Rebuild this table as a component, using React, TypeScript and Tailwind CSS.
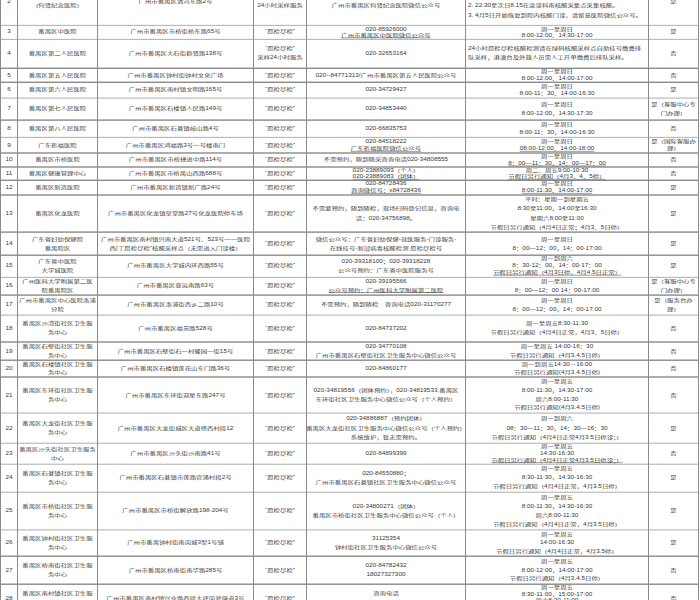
type Row = {
  no: string;
  name: string[];
  addr: string[];
  way: string[];
  tel: string[];
  time: string[];
  note: string[];
  leftTime?: boolean;
};

// lines starting with "_" are underlined in the source sheet
const Y = "“愿检尽检”";

const rows: Row[] = [
  {
    no: "2",
    name: ["番禺区何贤纪念医院", "（何贤纪念医院）"],
    addr: ["广州市番禺区清河东路2号"],
    way: [Y, "24小时采样服务"],
    tel: ["020-84518888", "广州市番禺区何贤纪念医院微信公众号"],
    time: [
      "愿检尽检人员请按以下时间段前往采样：",
      "1. 8:00-22:30在门诊核酸采集点采集核酸。",
      "2. 22:30至次日8.15在急诊科南核酸采集点采集核酸。",
      "3. 4月5日开始恢复到院内核酸门诊，请留意医院微信公众号。",
    ],
    note: ["是"],
    leftTime: true,
  },
  {
    no: "3",
    name: ["番禺区中医院"],
    addr: ["广州市番禺区市桥街桥东路65号"],
    way: [Y],
    tel: ["020-85926000", "_广州市番禺区中医院微信公众号"],
    time: ["周一至周日", "8:00-12:00、14:30-17:00"],
    note: ["是"],
  },
  {
    no: "4",
    name: ["番禺区第二人民医院"],
    addr: ["广州市番禺区大石街群贤路138号"],
    way: [Y, "采样24小时服务"],
    tel: ["020-32653164"],
    time: [
      "24小时愿检尽检核酸检测请在绿码核酸采样点自助挂号缴费排",
      "队采样，港澳台及外籍人员需人工开单缴费后排队采样。",
    ],
    note: ["否"],
    leftTime: true,
  },
  {
    no: "5",
    name: ["番禺区第五人民医院"],
    addr: ["广州市番禺区钟村街钟村文化广场"],
    way: [Y],
    tel: ["020--84771313/广州市番禺区第五人民医院公众号"],
    time: ["周一至周日", "8:00-12:00、14:00-17:00"],
    note: ["否"],
  },
  {
    no: "6",
    name: ["番禺区第六人民医院"],
    addr: ["广州市番禺区南村镇文明路165号"],
    way: [Y],
    tel: ["020-34729427"],
    time: ["周一至周日", "8:00-11：30、14:00-16:30"],
    note: ["是"],
  },
  {
    no: "7",
    name: ["番禺区第七人民医院"],
    addr: ["广州市番禺区石楼镇人民路149号"],
    way: [Y],
    tel: ["020-34853440"],
    time: ["周一至周日", "8:00-12:00，14:30-17:30"],
    note: ["是（客服中心专", "门办理）"],
  },
  {
    no: "8",
    name: ["番禺区第八人民医院"],
    addr: ["广州市番禺区石碁镇岐山路4号"],
    way: [Y],
    tel: ["020-66835753"],
    time: ["周一至周日", "8:00-11：30，14:00-16:30"],
    note: ["否"],
  },
  {
    no: "9",
    name: ["广东祈福医院"],
    addr: ["广州市番禺区鸿福路3号一号楼南门"],
    way: [Y],
    tel: ["020-84518222", "_广东祈福医院微信公众号"],
    time: ["周一至周日", "_08:00-12:00、14:00-18:00"],
    note: ["是（国际客服办", "理）"],
  },
  {
    no: "10",
    name: ["番禺区市桥医院"],
    addr: ["广州市番禺区市桥捷进中路114号"],
    way: [Y],
    tel: ["不需预约，随到随采咨询电话020-34808555"],
    time: ["周一至周日", "_8：00—11：30，14：00—17：00"],
    note: ["否"],
  },
  {
    no: "11",
    name: ["番禺区健康管理中心"],
    addr: ["广州市番禺区市桥禺山西路688号"],
    way: [Y],
    tel: ["020-23889093（个人）", "_020-23889083（团体）"],
    time: ["周二、周五9:00-10:30", "_节假日另行通知（4月3、4、5停）"],
    note: ["否"],
  },
  {
    no: "12",
    name: ["番禺区新造医院"],
    addr: ["广州市番禺区新造镇新广路24号"],
    way: [Y],
    tel: ["020-84728436", "_咨询微信号：x84728436"],
    time: ["周一至周日", "_8:00-11:30、14:00-17:00"],
    note: ["是"],
  },
  {
    no: "13",
    name: ["番禺区化龙医院"],
    addr: ["广州市番禺区化龙镇草堂路27号化龙医院停车场"],
    way: [Y],
    tel: ["不需要预约，随到随检，现场扫码登记信息，咨询电", "话：020-34756898。"],
    time: [
      "平时：星期一到星期五",
      "8:30至11:00，14:00至16:30",
      "星期六8:00至11:00",
      "节假日另行通知（4月4日正常；4月3、5日停）",
    ],
    note: ["是"],
  },
  {
    no: "14",
    name: ["广东省妇幼保健院", "番禺院区"],
    addr: ["广州市番禺区南村镇兴南大道521号、523号——医院", "西门“愿检尽检”核酸采样点（无需进入门诊楼）"],
    way: [Y],
    tel: ["微信公众号：广东省妇幼保健-就医服务-门诊服务-", "在线挂号-新冠病毒核酸检测 愿检尽检号"],
    time: ["周一至周日", "8：00—12：00，14：00-17:00"],
    note: ["是"],
  },
  {
    no: "15",
    name: ["广东省中医院", "大学城医院"],
    addr: ["广州市番禺区大学城内环西路55号"],
    way: [Y],
    tel: ["020-39318100；020-39318228", "公众号预约：广东省中医院服务号"],
    time: ["周一到周六", "8：30-12：00，14：00-17：00", "_节假日另行通知（4月3日停，4月4.5日正常）"],
    note: ["是"],
  },
  {
    no: "16",
    name: ["广州医科大学附属第二医", "院番禺院区"],
    addr: ["广州市番禺区亚运南路63号"],
    way: [Y],
    tel: ["020-39195566", "_公众号预约：广州医科大学附属第二医院"],
    time: ["周一至周日", "8：00—12：00 14：00-17:00"],
    note: ["是（客服中心专", "门办理）"],
  },
  {
    no: "17",
    name: ["广州市番禺区中心医院洛浦", "分院"],
    addr: ["广州市番禺区洛浦街西乡二路10号"],
    way: [Y],
    tel: ["不需预约，随到随检　咨询电话020-31170277"],
    time: ["周一至周日", "8：00—12：00，14：00-17.00"],
    note: ["是（服务台办", "理）"],
  },
  {
    no: "18",
    name: ["番禺区沙湾街社区卫生服", "务中心"],
    addr: ["广州市番禺区福景路528号"],
    way: [Y],
    tel: ["020-84737202"],
    time: ["周一至周五8:30-11:30", "节假日另行通知（4月4日正常，4月3、5日停）"],
    note: ["否"],
  },
  {
    no: "19",
    name: ["番禺区石壁街社区卫生服", "务中心"],
    addr: ["广州市番禺区石壁街石一村骏园一街15号"],
    way: [Y],
    tel: ["020-34770108", "广州市番禺区石壁街社区卫生服务中心微信公众号"],
    time: ["周一至周五 14:00-16：30", "节假日另行通知（4月3.4.5日停）"],
    note: ["否"],
  },
  {
    no: "20",
    name: ["番禺区石楼镇社区卫生服", "务中心"],
    addr: ["广州市番禺区石楼镇莲花山东门路36号"],
    way: [Y],
    tel: ["020-84860177"],
    time: ["周一到周五14:30－16:00", "节假日另行通知(4月3.4.5日停)"],
    note: ["否"],
  },
  {
    no: "21",
    name: ["番禺区东环街社区卫生服", "务中心"],
    addr: ["广州市番禺区东环街迎星东路247号"],
    way: [Y],
    tel: ["020-34819556（团体预约），020-34819533,番禺区", "东环街社区卫生服务中心微信公众号（个人预约）"],
    time: ["周一至周五", "8:00-11:30，14:30-17:00", "周六8:00-11:30", "节假日另行通知(4月3.4.5日停)"],
    note: ["否"],
  },
  {
    no: "22",
    name: ["番禺区大龙街社区卫生服", "务中心"],
    addr: ["广州市番禺区大龙街城区大道傍西村段12"],
    way: [Y],
    tel: ["020-34886887（预约团体）", "番禺区大龙街社区卫生服务中心微信公众号（个人预约）", "系统维护，暂无需预约。"],
    time: ["周一到周六", "08：30—11：30，14：30—16：30", "节假日另行通知（4月4日正常4月3.5日停诊；）"],
    note: ["是"],
  },
  {
    no: "23",
    name: ["番禺区沙头街社区卫生服务", "中心"],
    addr: ["广州市番禺区沙头街沙南路41号"],
    way: [Y],
    tel: ["020-84899399"],
    time: ["周一至周五", "14:30-16:30", "_节假日另行通知（4月4日正常4月3.5日停诊；）"],
    note: ["否"],
  },
  {
    no: "24",
    name: ["番禺区石碁镇社区卫生服", "务中心"],
    addr: ["广州市番禺区石碁镇市莲路官涌村段2号"],
    way: [Y],
    tel: ["020-84550880；", "广州市番禺区石碁镇社区卫生服务中心微信公众号"],
    time: ["周一至周五", "8:30-11:30，14:30-16:30", "节假日另行通知（4月4日正常，4月3.5日停）"],
    note: ["是"],
  },
  {
    no: "25",
    name: ["番禺区市桥街社区卫生服", "务中心"],
    addr: ["广州市番禺区市桥街解放路198-204号"],
    way: [Y],
    tel: ["020-34800271（团体）", "番禺区市桥街社区卫生服务中心微信公众号（个人）"],
    time: ["周一至周五", "8:00-11:30，14:30-16:30", "周六8:00-11:30", "节假日另行通知（4月4日正常，4月3.5日停）"],
    note: ["是"],
  },
  {
    no: "26",
    name: ["番禺区钟村街社区卫生服", "务中心"],
    addr: ["广州市番禺钟村街南岗城3型1号铺"],
    way: [Y],
    tel: ["31125354", "钟村街社区卫生服务中心微信公众号"],
    time: ["周一至周五", "14:00-16:30", "节假日另行通知（4月4日正常，4月3.5停）"],
    note: ["是"],
  },
  {
    no: "27",
    name: ["番禺区桥南街社区卫生服", "务中心"],
    addr: ["广州市番禺区桥南街南华路285号"],
    way: [Y],
    tel: ["020-84782432", "18027327300"],
    time: ["周一至周五", "8:00-12:00，14:00-17:00", "节假日另行通知（4月3.4.5日停）"],
    note: ["否"],
  },
  {
    no: "28",
    name: ["番禺区南村镇社区卫生服", "务中心"],
    addr: ["广州市番禺区南村镇兴业路西段大坪岗渡强道3号"],
    way: [Y],
    tel: ["咨询电话", "020-39212920、13539218182"],
    time: ["周一至周五", "8:30-11:00，15:00-17:00", "周六8:30-11:00", "节假日另行通知（4月3.4.5日停）"],
    note: ["否"],
  },
];

function Cell({ lines, left }: { lines: string[]; left?: boolean }) {
  return (
    <div className="bg-white flex flex-col justify-center min-w-0">
      {lines.map((raw, i) => {
        const u = raw.startsWith("_");
        const text = u ? raw.slice(1) : raw;
        return (
          <div
            key={i}
            className={`flex-1 basis-0 min-h-0 max-h-[12.8px] flex items-center whitespace-nowrap ${
              left ? "justify-start pl-[2px]" : "justify-center"
            }`}
          >
            <span className={u ? "underline decoration-[#777]" : ""}>{text}</span>
          </div>
        );
      })}
    </div>
  );
}

export default function App() {
  return (
    <div className="w-[700px] h-[600px] overflow-hidden bg-white">
      <div className="mt-[-22px] w-[699px] origin-top scale-y-[0.7] grid grid-cols-[16px_79px_155px_52px_158px_182px_49px] grid-rows-[65.64px_18.5px_39.93px_18.5px_21.36px_29.93px_22.79px_21.36px_18.5px_17.07px_19.93px_51.36px_31.36px_29.93px_24.21px_27.07px_37.07px_24.21px_22.79px_49.93px_41.36px_28.5px_38.5px_52.79px_35.64px_38.5px_38.5px] gap-x-px gap-y-[1.5px] p-px bg-[#8a8a8a] text-[6.4px] leading-none text-[#3a3a3a] font-['Liberation_Sans','Noto_Sans_CJK_SC',sans-serif]">
        {rows.map((r) => (
          <div key={r.no} className="contents">
            <Cell lines={[r.no]} />
            <Cell lines={r.name} />
            <Cell lines={r.addr} />
            <Cell lines={r.way} />
            <Cell lines={r.tel} />
            <Cell lines={r.time} left={r.leftTime} />
            <Cell lines={r.note} />
          </div>
        ))}
      </div>
    </div>
  );
}
